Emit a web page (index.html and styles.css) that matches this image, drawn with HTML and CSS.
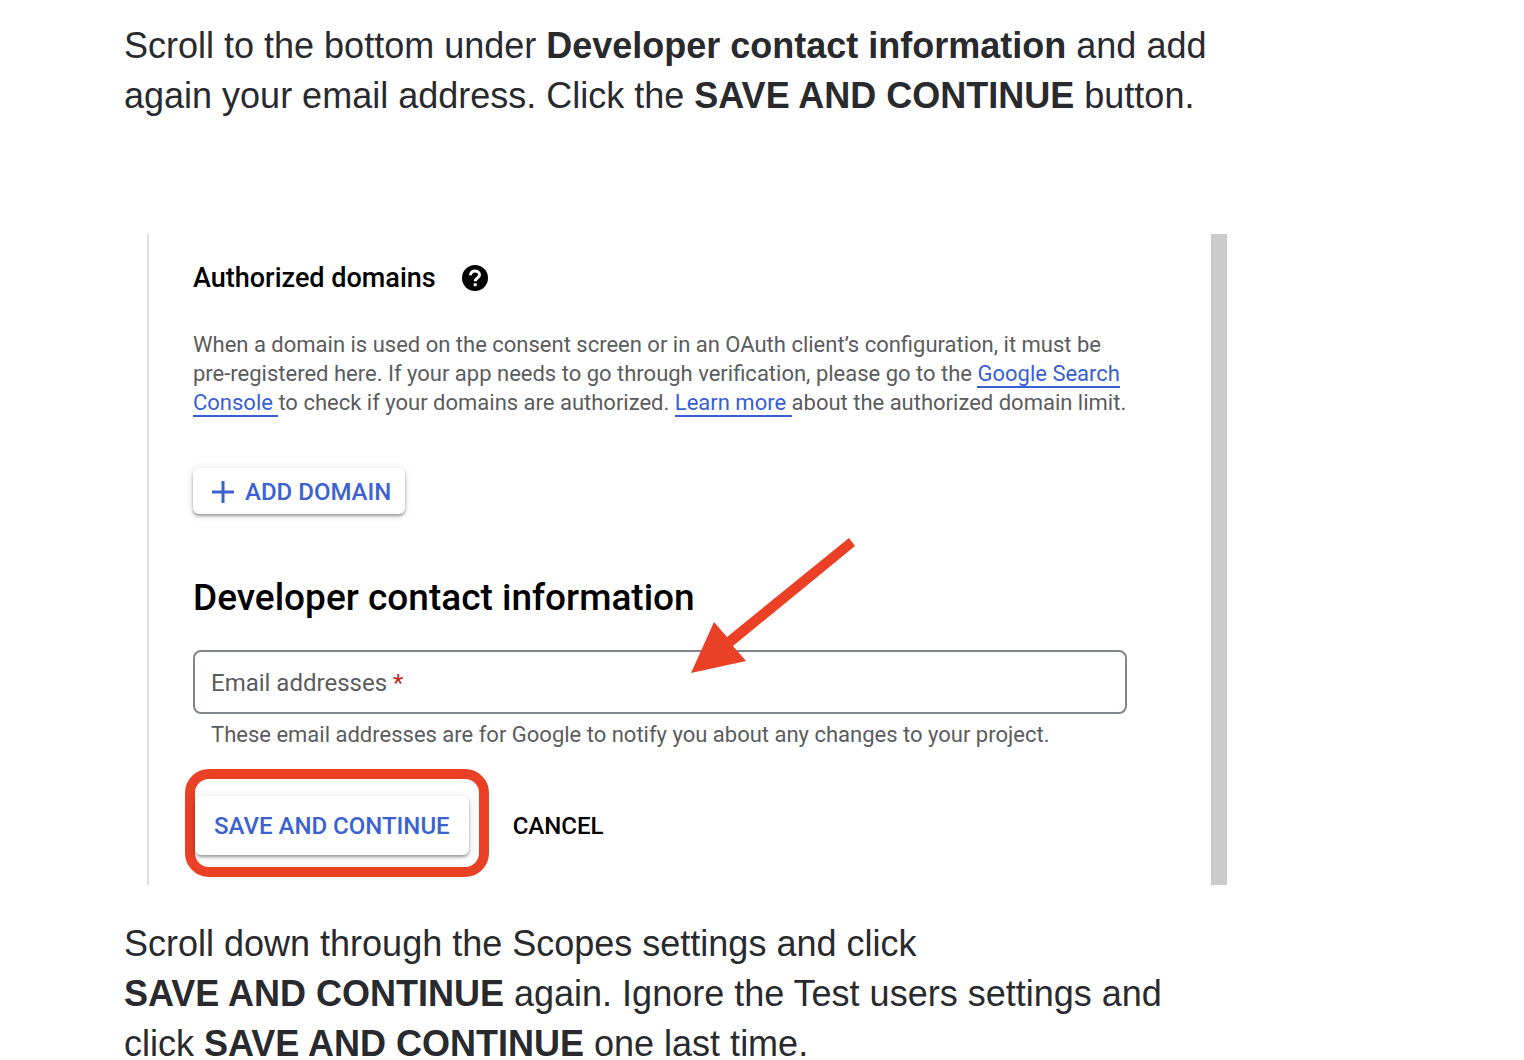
FILE: index.html
```html
<!DOCTYPE html>
<html lang="en">
<head>
<meta charset="utf-8">
<meta name="viewport" content="width=device-width, initial-scale=1">
<title>Developer contact information</title>
<link rel="stylesheet" href="styles.css">
</head>
<body>
<main class="article">
  <p class="prose">Scroll to the bottom under <strong>Developer contact information</strong> and add<br>again your email address. Click the <strong>SAVE AND CONTINUE</strong> button.</p>

  <section class="panel">
    <div class="heading-row">
      <h3 class="subtitle">Authorized domains</h3>
      <svg class="help-icon" viewBox="0 0 26 26" role="img" aria-label="Help"><circle cx="13" cy="13" r="13"/><path class="help-mark" d="M8.500 10.200C8.500 7.400 10.400 6 13 6s4.500 1.500 4.500 3.900c0 3-4.300 3.100-4.300 6.300M13.200 18.200v3"/></svg>
    </div>
    <p class="description">When a domain is used on the consent screen or in an OAuth client’s configuration, it must be<br>pre-registered here. If your app needs to go through verification, please go to the <a class="link" href="#">Google Search<br>Console </a>to check if your domains are authorized. <a class="link" href="#">Learn more </a>about the authorized domain limit.</p>
    <button class="button add-button" type="button">
      <svg class="plus-icon" viewBox="0 0 22 22" aria-hidden="true"><path d="M11 0v22M0 11h22"/></svg>
      ADD DOMAIN
    </button>
    <h2 class="title">Developer contact information</h2>
    <div class="field">
      <input class="field-input" id="emails" type="email" multiple required>
      <label class="field-label" for="emails">Email addresses <span class="required">*</span></label>
      <svg class="arrow" viewBox="0 0 166 136" aria-hidden="true"><path d="M0 135 23 84 36 99 158 0 164 8 42 108 55 123Z"/></svg>
    </div>
    <p class="hint">These email addresses are for Google to notify you about any changes to your project.</p>
    <div class="actions">
      <div class="highlighted"><button class="button save-button" type="button">SAVE AND CONTINUE</button></div>
      <button class="cancel-button" type="button">CANCEL</button>
    </div>
  </section>

  <p class="prose">Scroll down through the Scopes settings and click<br><strong>SAVE AND CONTINUE</strong> again. Ignore the Test users settings and<br>click <strong>SAVE AND CONTINUE</strong> one last time.</p>
</main>
</body>
</html>
```

FILE: styles.css
```css
* {
  box-sizing: border-box;
}

body {
  margin: 0;
  background: #fff;
}

.article {
  padding: 21px 124px 0;
}

.prose {
  margin: 0;
  color: #292a2d;
  font: 400 36px/50px "Liberation Sans", Arial, sans-serif;
  white-space: nowrap;
}

.panel {
  max-width: 1080px;
  margin: 113px 0 34px 23px;
  padding: 28px 84px 8px 44px;
  border-left: 2px solid #dfdfdf;
  border-right: 16px solid #cbcbcb;
  font-family: Roboto, sans-serif;
  color: #000;
}

.heading-row {
  display: flex;
  align-items: center;
  gap: 26px;
}

.subtitle {
  margin: 0;
  font-size: 27px;
  line-height: 32px;
  font-weight: 500;
}

.help-icon {
  width: 26px;
  height: 26px;
}

.help-mark {
  fill: none;
  stroke: #fff;
  stroke-width: 3;
}

.description {
  margin: 36px 0 51px;
  color: #5b5c5e;
  font-size: 22px;
  line-height: 29px;
  white-space: nowrap;
}

.link {
  color: #3860d4;
  text-decoration: none;
  border-bottom: 2px solid #3860d4;
}

.button {
  display: flex;
  align-items: center;
  border: 0;
  border-radius: 6px;
  background: #fff;
  color: #3b62d0;
  font: 500 24px/28px Roboto, sans-serif;
  white-space: nowrap;
  box-shadow: 0 2px 3px rgba(0, 0, 0, 0.35), 0 1px 10px rgba(0, 0, 0, 0.12);
}

.add-button {
  height: 46px;
  padding: 2px 14px 0 19px;
  gap: 11px;
}

.plus-icon {
  width: 22px;
  height: 22px;
  fill: none;
  stroke: #3b62d0;
  stroke-width: 3;
}

.title {
  margin: 62px 0 30px;
  font-size: 37px;
  line-height: 44px;
  font-weight: 500;
}

.field {
  position: relative;
}

.field-input {
  display: block;
  width: 100%;
  height: 64px;
  padding: 0 18px;
  border: 2px solid #80868b;
  border-radius: 8px;
  background: #fff;
  font: 400 24px/28px Roboto, sans-serif;
}

.field-label {
  position: absolute;
  left: 18px;
  top: 19px;
  color: #5b5c5e;
  font-size: 24px;
  line-height: 28px;
}

.required {
  color: #c5221f;
}

.arrow {
  position: absolute;
  left: 498px;
  bottom: 40px;
  width: 166px;
  height: 136px;
  fill: #ea4025;
}

.hint {
  margin: 6px 18px 20px;
  color: #5b5c5e;
  font-size: 22px;
  line-height: 29px;
  white-space: nowrap;
}

.actions {
  display: flex;
  align-items: baseline;
  gap: 24px;
  margin-left: -8px;
}

.highlighted {
  padding: 17px 10px 12px 0;
  border: 10px solid #ea4025;
  border-radius: 24px;
}

.save-button {
  height: 59px;
  padding: 0 19px;
}

.cancel-button {
  padding: 0;
  border: 0;
  background: none;
  color: #000;
  font: 500 24px/28px Roboto, sans-serif;
}
```
